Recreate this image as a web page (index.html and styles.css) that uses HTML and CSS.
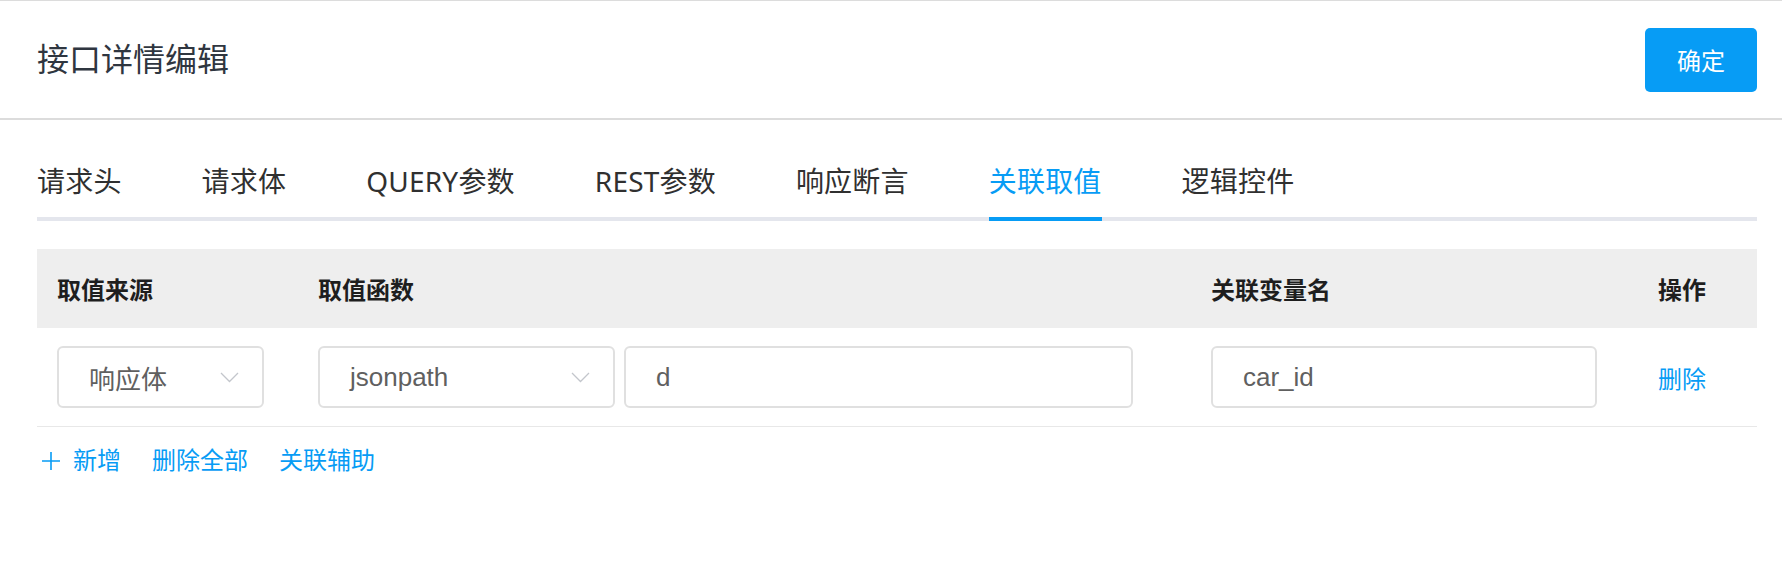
FILE: index.html
```html
<!DOCTYPE html>
<html lang="zh-CN">
<head>
<meta charset="utf-8">
<title>接口详情编辑</title>
<link rel="stylesheet" href="styles.css">
</head>
<body>
<div class="page">
	<div class="topbar">
		<h2 class="title">接口详情编辑</h2>
		<button type="button" class="btn-ok">确定</button>
	</div>
	<div class="main">
		<ul class="tabs">
			<li>请求头</li>
			<li>请求体</li>
			<li>QUERY参数</li>
			<li>REST参数</li>
			<li>响应断言</li>
			<li class="active">关联取值</li>
			<li>逻辑控件</li>
		</ul>
		<div class="grid">
			<div class="row head">
				<div class="cell">取值来源</div>
				<div class="cell">取值函数</div>
				<div class="cell">关联变量名</div>
				<div class="cell">操作</div>
			</div>
			<div class="row">
				<div class="cell">
					<div class="select w-src"><span>响应体</span><svg width="19" height="11" viewBox="0 0 19 11"><polyline points="1,1 9.5,9.5 18,1" fill="none" stroke="#c3c6cc" stroke-width="1.3"/></svg></div>
				</div>
				<div class="cell pair">
					<div class="select w-fn"><span>jsonpath</span><svg width="19" height="11" viewBox="0 0 19 11"><polyline points="1,1 9.5,9.5 18,1" fill="none" stroke="#c3c6cc" stroke-width="1.3"/></svg></div>
					<div class="input w-exp">d</div>
				</div>
				<div class="cell">
					<div class="input w-var">car_id</div>
				</div>
				<div class="cell"><a class="link">删除</a></div>
			</div>
		</div>
		<div class="actions">
			<a class="link add"><svg width="18" height="18" viewBox="0 0 18 18"><path d="M9 0V18M0 9H18" stroke="#079cf5" stroke-width="1.6"/></svg>新增</a>
			<a class="link">删除全部</a>
			<a class="link">关联辅助</a>
		</div>
	</div>
</div>
</body>
</html>
```

FILE: styles.css
```css
html,body{margin:0; padding:0; background:#fff;}
body{font-family:"Liberation Sans","Noto Sans CJK SC",sans-serif; color:#333;}
ul{margin:0; padding:0; list-style:none;}

.page{border-top:1px solid #dcdcdc;}
.topbar{display:flex; align-items:center; justify-content:space-between; height:117px; padding:0 25px 0 37px; border-bottom:2px solid #dcdcdc;}
.title{margin:0; font-size:32px; font-weight:normal; color:#2f3640; line-height:40px;}
.btn-ok{width:112px; height:64px; border:0; border-radius:5px; background:#079cf5; color:#fff; font-family:inherit; font-size:24px; cursor:pointer;}

.main{padding:0 25px 0 37px;}
.tabs{display:flex; border-bottom:4px solid #e4e6ed; padding-top:41px; font-family:"Noto Sans","Noto Sans CJK SC",sans-serif; letter-spacing:0.2px;}
.tabs li{margin-right:80px; margin-bottom:-4px; padding-bottom:16px; border-bottom:4px solid transparent; font-size:28px; line-height:40px; color:#303030; cursor:pointer;}
.tabs li.active{color:#079cf5; border-bottom-color:#079cf5;}

.grid{margin-top:28px;}
.row{display:grid; grid-template-columns:261px 893px 447px 119px; align-items:center; padding:18px 0 18px; border-bottom:1px solid #e8e8e8;}
.row.head{height:79px; padding:0; border:0; background:#eee; font-size:24px; font-weight:bold; color:#1e1e1e;}
.cell{padding-left:20px;}
.pair{display:flex; gap:9px;}

.select,.input{box-sizing:border-box; display:flex; align-items:center; height:62px; padding:0 23px 0 30px; border:2px solid #e0e0e0; border-radius:6px; font-size:26px; color:#606060;}
.select{justify-content:space-between;}
.w-src{width:207px;}
.w-fn{width:297px;}
.w-exp{width:509px;}
.w-var{width:386px;}

.link{font-size:24px; color:#079cf5; cursor:pointer;}
.actions{display:flex; align-items:center; margin-top:18px; line-height:32px;}
.actions .link{margin-right:31px;}
.add{display:flex; align-items:center; gap:13px; margin-left:5px;}
```
